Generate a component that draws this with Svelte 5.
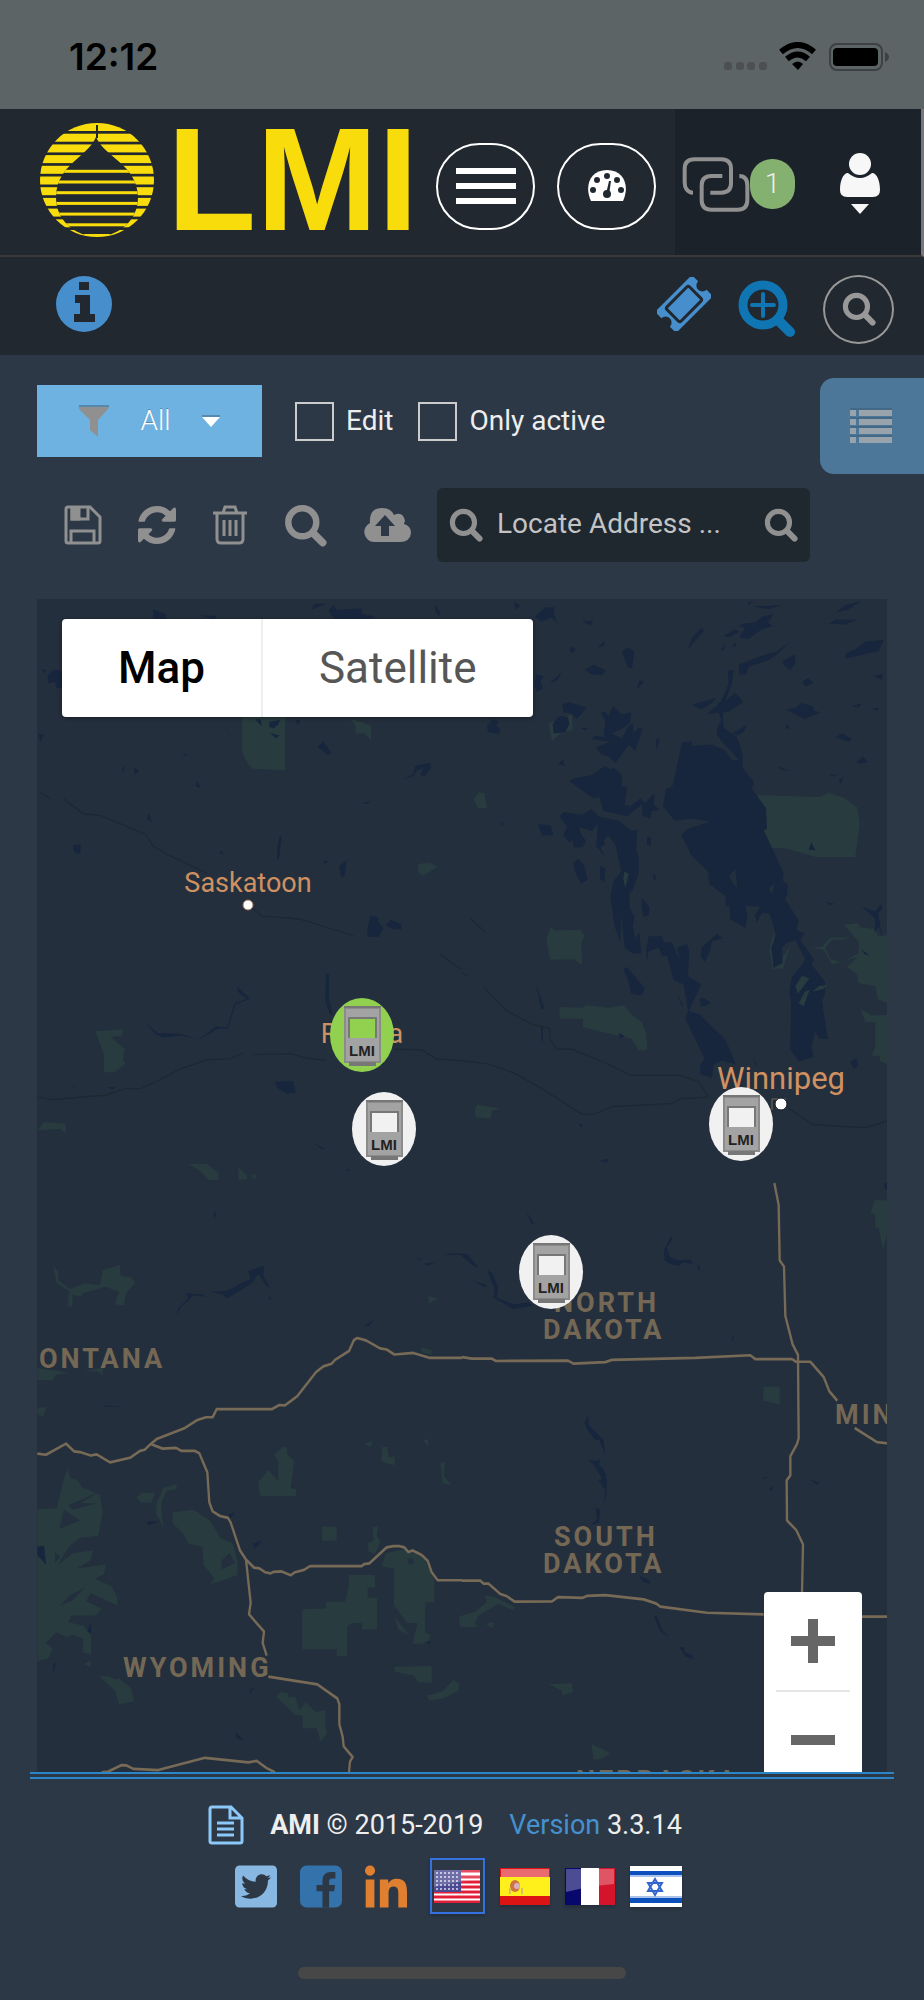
<script>
  const markers = [
    { x: 362, y: 1035, body: '#92d050', name: 'Regina station' },
    { x: 384, y: 1129, body: '#f1f1f1', name: 'South Regina station' },
    { x: 741, y: 1124, body: '#f1f1f1', name: 'Winnipeg station' },
    { x: 551, y: 1272, body: '#f1f1f1', name: 'Dakota station' }
  ];
  const stripes = Array.from({ length: 11 }, (_, i) => 1 + i * 10.7);
  let edit = $state(false);
  let active = $state(false);
  let address = $state('');
</script>

{#snippet lens(size, color)}
  <svg width={size} height={size} viewBox="0 0 40 40" fill="none" stroke={color} stroke-width="6" stroke-linecap="round" aria-hidden="true">
    <circle cx="17" cy="17" r="13" /><path d="M27 27 36 36" stroke-width="7" />
  </svg>
{/snippet}

<div class="page">
  <div class="status">
    <span class="time">12:12</span>
    <svg width="166" height="30" viewBox="0 0 166 30" aria-hidden="true">
      <g fill="#4c5051"><rect x="0" y="20" width="8" height="8" rx="3" /><rect x="12" y="20" width="8" height="8" rx="3" /><rect x="23" y="20" width="8" height="8" rx="3" /><rect x="35" y="20" width="8" height="8" rx="3" /></g>
      <g fill="none" stroke="#000" stroke-width="6"><path d="M57 10Q74-4 90 10" /><path d="M63 17Q74 8 84 17" /></g>
      <path d="M68 22Q74 17 79 22L74 28Z" />
      <rect x="106" y="2" width="52" height="26" rx="7" fill="none" stroke="#3d4143" stroke-width="2" />
      <rect x="109" y="6" width="45" height="18" rx="4" />
      <path d="M161 10q4 2 4 5t-4 5z" fill="#3d4143" />
    </svg>
  </div>

  <header>
    <a class="logo" href="#home" aria-label="LMI home">
      <svg width="116" height="116" viewBox="0 0 116 116" aria-hidden="true">
        <defs>
          <clipPath id="disc"><circle cx="58" cy="58" r="57" /></clipPath>
          <clipPath id="drop"><path d="M57 15C66 36 98 42 99 75C99 96 85 108 70 113H46C31 108 17 96 17 75C18 42 48 36 57 15Z" /></clipPath>
        </defs>
        <g clip-path="url(#disc)">
          {#each stripes as y}<rect x="0" {y} width="116" height="8" fill="#f9dc0b" />{/each}
          <g clip-path="url(#drop)">
            <rect width="116" height="116" fill="#212830" />
            {#each stripes.slice(4) as y}<rect x="0" y={y + 4} width="116" height="3" fill="#f9dc0b" />{/each}
          </g>
          <rect x="57" y="3" width="2" height="13" fill="#212830" />
        </g>
      </svg>
      <span>LMI</span>
    </a>
    <button class="pill" aria-label="Menu">
      <svg width="60" height="36" viewBox="0 0 60 36" fill="#fff"><path d="M0 0h60v6H0zM0 15h60v6H0zM0 30h60v6H0z" /></svg>
    </button>
    <button class="pill" aria-label="Dashboard">
      <svg width="40" height="34" viewBox="0 0 40 34"><path d="M4 32C-3 17 3 1 20 1S43 17 36 32Z" fill="#fff" />
        <g fill="#212830"><circle cx="20" cy="7" r="3" /><circle cx="10" cy="11" r="3" /><circle cx="30" cy="11" r="3" /><circle cx="6" cy="21" r="3" /><circle cx="34" cy="21" r="3" /><circle cx="20" cy="25" r="4" /><path d="M19 25 22 12h2l-2 14z" /></g></svg>
    </button>
    <div class="account">
      <button class="links" aria-label="Connections">
        <svg width="68" height="56" viewBox="785 466 204 168" fill="none" stroke="#909090" stroke-width="12"><path d="M818 576C800 576 793 560 793 545V505Q793 476 822 476H903Q932 476 932 505V548Q932 576 903 576H870M906 526H873Q844 526 844 555V598Q844 627 873 627H952Q981 627 981 598V555Q981 526 957 526" /></svg>
        <span class="badge">1</span>
      </button>
      <button class="user" aria-label="Account">
        <svg width="42" height="64" viewBox="0 0 42 64" fill="#f7f7f7"><path d="M9 21Q21 31 33 21C38 21 41 29 41 38Q41 45 34 45H8Q1 45 1 38C1 29 4 21 9 21Z" /><circle cx="21" cy="12" r="11" /><path d="M12 52H30L21 62Z" /></svg>
      </button>
    </div>
  </header>

  <div class="infobar">
    <button aria-label="Information">
      <svg width="56" height="56" viewBox="0 0 56 56"><circle cx="28" cy="28" r="28" fill="#478fcc" /><path d="M23 6h10v8H23zM19 19h15v19h5v8H18v-8h6V27h-5z" fill="#212830" /></svg>
    </button>
    <div class="infotools">
      <button class="ticket" aria-label="Tickets">
        <svg width="54" height="54" viewBox="0 0 54 54"><g transform="rotate(-45 27 27)"><path d="M1 14Q1 12 4 12H50Q53 12 53 14V21A6 6 0 0 0 53 33V40Q53 42 50 42H4Q1 42 1 40V33A6 6 0 0 0 1 21V14Z" fill="#478fcc" /><rect x="11" y="17" width="32" height="20" rx="2" fill="#478fcc" stroke="#212830" stroke-width="3" /></g></svg>
      </button>
      <button aria-label="Zoom to stations">
        <svg width="58" height="58" viewBox="0 0 58 58" fill="none" stroke="#0f75b3"><circle cx="25" cy="25" r="20" stroke-width="9" /><path d="M40 40 52 52" stroke-width="10" stroke-linecap="round" /><path d="M25 14V36M14 25H36" stroke-width="4" stroke-linecap="round" /></svg>
      </button>
      <button class="ring" aria-label="Search">{@render lens(34, '#989898')}</button>
    </div>
  </div>

  <main>
    <div class="filters">
      <button class="all">
        <svg width="32" height="34" viewBox="0 0 32 34"><path d="M2 1H30Q32 2 30 5L20 16V33L12 26V16L1 5Q0 2 2 1Z" fill="#909090" /><path d="M1 1H31V3H1Z" fill="#5589ad" /></svg>
        <span>All</span>
        <svg width="20" height="14" viewBox="0 0 20 14"><path d="M1 3H19L10 13Z" fill="#fff" /><path d="M1 1H19V3H1Z" fill="#5589ad" /></svg>
      </button>
      <label><input type="checkbox" bind:checked={edit} />Edit</label>
      <label><input type="checkbox" bind:checked={active} />Only active</label>
      <button class="tab" aria-label="List view">
        <svg width="42" height="37" viewBox="0 0 42 37"><path d="M0 3h6v6H0zM9 3h33v6H9zM0 12h6v6H0zM9 12h33v6H9zM0 21h6v6H0zM9 21h33v6H9zM0 30h6v6H0zM9 30h33v6H9z" fill="#98a3ac" /><path d="M0 1h42v2H0zM0 10h42v2H0zM0 19h42v2H0zM0 28h42v2H0z" fill="#426987" /></svg>
      </button>
    </div>

    <div class="tools">
      <div class="icons">
        <button aria-label="Save"><svg width="38" height="40" viewBox="0 0 38 40" fill="none" stroke="#909090" stroke-width="3"><path d="M3 2H26L36 12V36Q36 38 34 38H4Q2 38 2 36V4Q2 2 4 2ZM7 38V26H30V38" /><path d="M8 3V14H24V3" /><path d="M8 3H15V14H8z" fill="#909090" /></svg></button>
        <button aria-label="Refresh"><svg width="38" height="40" viewBox="0 0 1536 1536"><path fill="#909090" d="M1511 928q0 5-1 7-64 268-268 434.5T764 1536q-146 0-282.5-55T238 1324l-129 129q-19 19-45 19t-45-19-19-45V960q0-26 19-45t45-19h448q26 0 45 19t19 45-19 45l-137 137q71 66 161 102t187 36q134 0 250-65t186-179q11-17 53-117 8-23 30-23h192q13 0 22.5 9.5t9.5 22.5zm25-800v448q0 26-19 45t-45 19h-448q-26 0-45-19t-19-45 19-45l138-138Q969 256 768 256q-134 0-250 65T332 500q-11 17-53 117-8 23-30 23H50q-13 0-22.5-9.5T18 608v-7q65-268 270-434.5T768 0q146 0 284 55.5T1297 212l130-129q19-19 45-19t45 19 19 45z" /></svg></button>
        <button aria-label="Delete"><svg width="36" height="40" viewBox="0 0 36 40" fill="none" stroke="#909090" stroke-width="3"><path d="M1 8H35M11 8 13 2H23L25 8M5 8V34Q5 38 9 38H27Q31 38 31 34V8M12 15V31M18 15V31M24 15V31" /></svg></button>
        <button aria-label="Find">{@render lens(43, '#909090')}</button>
        <button aria-label="Upload"><svg width="48" height="36" viewBox="0 0 48 36"><path d="M11 35A10 10 0 0 1 7 16Q6 1 19 1Q28 1 31 8Q40 4 42 14Q41 16 41 17Q48 19 48 26Q47 35 37 35Z" fill="#909090" /><path d="M22 8 32 19H26V29H18V19H12Z" fill="#2d3846" /></svg></button>
      </div>
      <form class="search" onsubmit={(e) => e.preventDefault()}>
        {@render lens(34, '#909090')}
        <input type="text" aria-label="Locate address" placeholder="Locate Address ..." bind:value={address} />
        <button aria-label="Locate">{@render lens(34, '#909090')}</button>
      </form>
    </div>

    <section class="map" aria-label="Map">
      <svg class="land" viewBox="37 599 850 1173" preserveAspectRatio="xMidYMid slice">
        <g transform="translate(0 590) scale(.33333 .38265)">
          <g class="park">
            <path d="M727 330H855V472L758 467Q735 450 726 420ZM1050 335 1113 355V393L1094 375H1066V355ZM1254 716 1290 712 1312 724 1270 746 1256 740ZM286 1153 368 1148V1164L332 1168 375 1200 368 1226 376 1238 345 1260H312V1213ZM113 1412 133 1390 197 1395V1420L180 1408ZM565 1500 620 1500 656 1522V1542H625L600 1518ZM715 1508 741 1530V1540L715 1542ZM752 1530 767 1526V1542Z" />
          </g>
          <g class="water">
            <path d="M460 50 496 62 500 77 460 74ZM603 66 648 68 645 78ZM932 52 945 36 978 36ZM986 55 1000 38 1010 52 1085 48V62L1126 70 1100 78H1005ZM1304 38 1322 60 1316 68 1306 55ZM122 205 138 210 135 218ZM142 225 160 208 186 212V255L170 258 165 240 145 245ZM115 377H131L122 398ZM660 336 700 394 695 385ZM765 338H782L785 356ZM808 345 840 340 835 352 820 362 808 358ZM810 374 838 380 828 388ZM885 340H902L893 353ZM953 410 970 394 993 425 985 431ZM1208 496 1240 480 1246 460 1290 451 1294 465 1275 486 1262 484 1268 466 1250 472 1238 487ZM372 457 374 476 366 470ZM402 464 418 472 405 482ZM590 497 602 517 587 513ZM547 427 562 431 554 434ZM447 583 456 608 440 598ZM220 665 242 665 241 690 228 688 219 678ZM838 645 845 644 837 702 831 705 832 670ZM1017 722 1039 706 1035 745 1025 752ZM967 707 985 708 975 716ZM655 686 668 682 668 692ZM1112 851 1134 855 1135 868 1151 884 1135 907 1102 906V884ZM1157 876 1172 861 1204 874 1203 887 1180 886ZM978 1003 987 1005V1068L999 1110 990 1108 976 1075ZM710 1035 750 1068 706 1084 684 1147 655 1146 595 1176 648 1140 682 1144 703 1080 740 1068 716 1052ZM438 1130 472 1158 540 1160 594 1174 540 1164 490 1170 465 1160ZM826 1285 880 1284 887 1314 860 1316 830 1300ZM210 1292 230 1300 218 1298ZM323 1300 347 1298 338 1306ZM942 1446 973 1458 970 1463ZM1085 556 1114 552 1100 559ZM1040 1512 1052 1515 1045 1520Z" />
          </g>
          <path class="minor" d="M122 530 150 545M190 545 250 585 305 590 435 638 460 670 500 690 620 740M755 830 785 852 900 860 960 876 1060 903M1320 952 1386 993M115 1325 150 1332 320 1320 370 1304 425 1302 480 1280 540 1252 620 1228 690 1225 730 1210M760 1214 875 1212 910 1222 980 1230M1180 1200 1265 1202 1310 1226 1386 1230" />
        </g>
        <g transform="translate(462 590) scale(.33333 .38265)">
          <g class="park">
            <path d="M888 536 1072 541 1100 530 1145 543 1186 568 1193 610 1180 698H1062L970 675 930 674 900 625ZM260 348 330 325 332 365 295 375 270 395ZM35 547 48 530H67L75 570H47ZM253 915 265 882 280 890 355 888 368 905 358 920 360 980 335 965 265 966ZM292 1090 360 1092 375 1085 440 1092 485 1085 510 1110 540 1130 553 1160 556 1203H530L508 1172 395 1150 363 1142V1120L293 1120ZM38 1360 45 1345 115 1355 90 1362 85 1382 42 1378ZM935 895 942 940 935 985 970 950 985 930 962 990H932L922 940ZM1145 875 1188 870 1195 882 1235 885 1250 905 1275 902V1080L1248 1070 1240 1035 1190 1028 1185 1005 1155 985 1185 960 1110 978 1085 940 1050 935 1080 932 1105 908H1165L1145 914H1110L1090 935 1105 965 1140 972 1190 950V918ZM1195 1095 1230 1112 1275 1110V1238L1252 1230 1255 1217 1230 1217 1240 1190V1130L1210 1128Z" />
          </g>
          <g class="water">
            <path d="M660 398 690 396V408L750 404 790 420 810 444 830 444 765 380V360L778 340 770 320 735 325 760 305 778 290 800 245 797 210 815 210 810 245 790 290 820 268 845 293 800 318 782 320 785 360 825 385 842 430V465L875 502 870 520 912 570 915 625 905 627 965 740 962 760 978 770 975 800 968 805 1010 865 1003 890 1028 898 1015 915 1055 965 1050 980 1090 1025 1088 1060 1080 1075 1098 1174 1072 1172 1060 1155 1048 1195 1055 1220 1010 1232 985 1200 987 1078 982 1045 990 1010 1020 980 1030 965 1000 915 975 922 960 935 962 975 935 988 928 935 942 900 922 845 900 845 885 868 878 850 895 828 850 825 857 850 850 884 804 860 803 827 792 826 790 800 742 768 738 735 688 693 658 640 675 625 745 605 690 598 638 603 603 565 612 520 632 512Z" />
            <path d="M322 500 335 492 385 485 430 460 448 470 455 463 480 485V512L495 515 488 562 505 565 537 543 548 557 578 530 575 560 592 574 570 578 565 598 542 590 540 560 495 592 425 577 412 540 395 545 330 505ZM292 592 305 580 360 588 388 573 410 592 470 603 510 630 525 625 523 680 530 700V740L512 785 502 790 503 830 518 855 512 880 520 910 532 895 538 950 512 950 488 935 478 850 475 920 458 880 445 800 455 760 478 735 460 665 438 640 425 655 430 665 415 672 430 698 403 670 407 610 390 630 352 620 355 635 372 655 362 672 335 672 332 655 320 660 303 640 315 618ZM335 715 348 702 367 720 377 757 357 768 338 735ZM414 720 430 728 427 765 414 755ZM540 805 562 828 560 850 545 855 538 830ZM560 905 600 905 605 920 630 922 655 970 645 935 675 925 682 945 678 1010 718 1030 680 1100 715 1110 790 1175 822 1240 780 1230 755 1240 750 1275 715 1265V1240L728 1225 670 1120 678 1100 665 1030 635 1020 615 955 600 958 590 935 560 945 555 970 552 940ZM718 935 765 898 782 910 750 918 745 940 728 973 716 955ZM484 990 495 985 548 1040 540 1060 508 1055 500 1025ZM712 1070 725 1065 747 1080 718 1090ZM645 1055 665 1090 658 1085ZM222 1030 248 1095 238 1096ZM237 1140 242 1142 243 1188 238 1172Z" />
            <path d="M272 350 290 330 318 332 322 350 310 372 275 375ZM300 300 320 293 375 308 345 337 325 322 305 320ZM415 320 430 318 440 330 453 303 478 325 508 320 505 345 485 360 450 375 480 388 500 355 512 348 515 375 530 360 542 362 520 420 500 405 460 452 440 435 418 430 402 410 440 398 468 400 390 390 398 380 425 385 430 340ZM582 390 595 387 583 418ZM75 355 95 338 110 345 102 352 115 365 112 377 78 372ZM218 70 250 45 278 45 275 60 285 85 268 72 240 83ZM155 30 177 42 160 50ZM368 210 395 195 432 210 420 222 390 220ZM480 160 497 150 517 160 510 205 498 203 485 175ZM405 150 430 133 425 147ZM322 155 332 147 341 155 330 166ZM222 220 245 225 235 240 244 258 225 265 218 250ZM262 245 298 215 288 235ZM523 260 533 235 547 240ZM360 80 375 82 395 80 385 92 365 84ZM678 155 690 125 720 98 725 107ZM785 120 820 102 832 110 800 124ZM832 120 850 100 832 95 840 88 880 85 900 70 935 62 918 85 932 95 900 102 860 128 835 125ZM870 43 958 40 920 50ZM855 35 875 28 860 40ZM775 158 790 140 785 158ZM810 145 825 135 818 150ZM830 195 900 172 945 160 985 135 940 172 915 185 862 200 850 222 832 220ZM960 187 1000 168 1000 190 985 210 970 200ZM1020 240 1038 230 1055 243 1030 252ZM690 300 762 282 750 295 718 312ZM972 312 1000 308 1020 295 1055 305 1055 315 1075 320 1028 337ZM1120 60 1150 40 1200 28 1160 50ZM1100 88 1122 77 1188 78 1150 90ZM1150 165 1180 155 1210 135 1265 130 1250 160 1220 165 1150 180ZM1235 225 1262 220 1260 235ZM1170 303 1200 295 1190 308ZM1230 310 1248 308 1250 317ZM1120 385 1140 375 1170 388 1160 397ZM1182 450 1205 435 1218 450 1195 454ZM945 460 985 473 960 470ZM1100 482 1128 482 1108 488ZM1130 495 1145 490 1135 507ZM810 375 855 352 845 372 825 380ZM228 612 265 615 275 640 240 642ZM1048 660 1060 680 1040 678ZM555 645H567V667H555ZM572 740 585 750 577 760ZM1200 828 1240 840 1255 820 1262 832 1248 845 1260 905 1250 880 1238 895 1240 860ZM1198 938 1222 955 1208 952ZM1165 1232 1185 1223 1187 1245 1175 1252ZM1088 815 1118 820 1105 824ZM470 1158 488 1165 475 1172ZM410 1492 442 1486 435 1495ZM875 1227 888 1242 880 1240ZM350 1393 363 1398 355 1404ZM288 455 303 443 308 460ZM115 610 125 604 120 617ZM975 350 985 362 970 362ZM355 360 378 360 368 367Z" />
          </g>
          <path d="M800 750 820 728 826 780ZM920 780 938 765 930 795Z" fill="#242f3d" />
          <g class="park"><path d="M487 735 500 742 490 778 484 755ZM1000 1035 1020 1008 1042 1015 1008 1055ZM1052 1050 1070 1035 1097 1032 1085 1042ZM1010 1080 1028 1050 1043 1045 1025 1088Z" /></g>
          <path class="minor" d="M25 858 68 893M0 1000 18 1010M65 1038 135 1100 210 1135 262 1145 265 1175 285 1200H330L420 1232 505 1268H655L710 1285 738 1325 655 1330 630 1342 450 1350 395 1370H360L230 1298 155 1262 75 1238 0 1230M980 1355 1055 1398 1210 1405 1275 1388" />
        </g>
        <g transform="translate(0 1180) scale(.33333 .38265)">
          <g class="park">
            <path d="M160 225 175 240V262L210 285 255 270 300 275 308 235 360 222 362 250 395 255 405 270 378 295 372 328 345 325 357 292 315 278 275 290 248 295 245 305 218 300 217 330H203L208 290 170 270ZM112 492 170 498 205 505 170 508 158 523H112ZM112 595 140 593 128 620 112 610ZM250 500 310 490 308 510 290 500ZM1285 303 1315 310 1286 323ZM1262 437 1295 445V457L1265 450ZM210 745 205 762 212 778 235 785 245 803 300 822 308 868 295 930 240 935 205 960 175 1005 220 975 280 968 270 995 230 1015 318 1005 312 1030 285 1042 335 1062 352 1090V1112L272 1080 258 1100 305 1120 285 1138H215L205 1155 250 1165 273 1190V1240L248 1235 250 1200 220 1188 200 1195 168 1182 138 1210 158 1225 145 1250 112 1258V860L170 858 195 770ZM410 830 425 817H465L455 843H422ZM470 845 490 805 530 795V808L500 812 483 845 485 880 492 910 468 870ZM518 868 580 862 632 892 660 935 698 950 713 1000V1032L630 1058 643 1042 610 1005 608 960 565 950 550 925 518 897ZM775 790 805 757 835 788 835 735 823 718 850 697 862 700 860 715 883 735 872 805 888 808V826H780ZM1092 690 1118 682 1112 698ZM1143 735 1147 698H1162L1167 725 1184 722V745L1160 740ZM1270 680 1284 677V697ZM1321 738H1335L1332 775 1355 797 1328 793ZM966 906H1010V943H966ZM1118 906H1135L1130 930 1142 945 1125 978 1105 970 1104 948 1120 943ZM907 1122 978 1120V1102H1035L1045 1068 1048 1032H1124L1126 1065H1103V1092H1131V1175H1086V1158H1055L1041 1168V1244H1010V1226H907ZM1145 1010 1158 975 1215 965 1270 985 1295 1025 1303 1045V1103L1276 1104 1275 1182 1293 1190 1280 1212H1237L1253 1158H1222L1208 1142 1182 1112V1015ZM1182 1140 1230 1192 1195 1175ZM1182 1272 1295 1270V1313H1255L1240 1295 1185 1285ZM1280 1348 1330 1335 1360 1307 1378 1315 1375 1335 1330 1355 1290 1360ZM828 1350 843 1338 865 1342V1352L885 1350 898 1385 917 1365 947 1390 976 1385V1430L982 1448 962 1468 950 1433H908V1400L885 1397ZM298 1297H325L345 1305 358 1302 395 1330 402 1363 357 1370 345 1335ZM252 1265 272 1255V1273ZM1378 1140H1386V1172L1378 1160Z" />
          </g>
          <path d="M192 862 240 890 178 912ZM205 850 298 815 240 845 292 845 220 862ZM180 985 165 1000V972ZM180 1112 210 1085 255 1065 215 1100ZM688 975 705 1000 665 1018V995ZM1222 990H1240V1003H1225Z" fill="#242f3d" />
          <g class="water"><path d="M745 238 792 224 790 250 810 280 800 278 775 245 755 270 682 310 665 298 632 293 675 290 705 280 720 270 750 260ZM795 217 860 222 820 218ZM558 295 612 300 615 305 580 302 545 330 530 352 535 335 565 308ZM488 312 508 312ZM640 90 648 80 645 102ZM1095 380 1120 366 1108 382ZM1272 218 1308 215 1280 225ZM1248 203 1267 207 1260 210ZM1325 198 1350 192H1386V196H1340ZM312 588 368 594 315 592ZM440 893 478 892 445 902ZM685 875 706 868 690 885ZM757 950 785 943 765 964ZM112 958 132 956 138 1005 112 980ZM272 1155 274 1185 262 1180ZM160 1265 168 1262 160 1290ZM750 1332 762 1325 750 1343ZM705 1442 732 1465 710 1458ZM150 1420 158 1447ZM1270 1208 1292 1206 1290 1212ZM803 304 814 308 812 314Z" /></g>
          <g class="road"><path d="M112 715 138 718 198 689 222 709 240 711 272 720 290 717 330 738 390 726 420 708 434 705 452 690 470 677 555 648 590 628 618 620H638L650 599H815L838 588 855 589 892 565 948 502 970 487 995 480 1005 470 1047 447 1062 418 1072 413 1098 419 1140 440 1160 443 1183 456 1240 452 1290 465H1386M452 690 488 702 528 700 545 708H585L598 714 622 764 628 843 638 866 660 878 684 883 692 895 720 968 738 992 762 1013 778 1015 795 1025 812 1028 820 1024 845 1023 872 1033 885 1025 912 1019 930 1009H1085L1092 1004 1108 1002 1160 960 1180 957H1200L1213 960 1225 972 1238 968 1265 980 1283 995 1295 1025 1313 1046H1386M738 992 752 1105 747 1135 792 1180 788 1210 800 1243M805 1298 952 1318 1012 1355 1018 1370V1422L1028 1455 1031 1480 1058 1508 1050 1520 1047 1548M305 1548 325 1546 365 1529 380 1530 400 1539 475 1542 615 1510 745 1522 770 1518 800 1537 825 1548" /></g>
        </g>
        <g transform="translate(462 1180) scale(.33333 .38265)">
          <g class="park"><path d="M1226 85 1238 53H1275V145L1263 180 1250 125H1240V90ZM905 540H953V586L903 577ZM68 1085 98 1090 158 1115 155 1125 110 1108 50 1138 38 1160 50 1168H0V1138L40 1128 75 1102ZM70 1160 97 1155 93 1172ZM260 1318 330 1315 333 1338 302 1348 300 1335ZM388 1473 445 1498 420 1513 395 1515Z" /></g>
          <g class="water"><path d="M0 192 18 195 48 228 38 226 0 200ZM75 235 92 245 108 280 105 308 155 325 200 320 215 328 155 338 95 308 98 285ZM30 262 75 275 68 280ZM192 82 218 115 208 113ZM605 185 628 146 632 155 615 175 622 200 650 210 685 208 693 220 665 215 650 225 625 220 608 210ZM705 220 715 228 710 238ZM1035 398 1058 388 1045 395ZM808 418 818 402 812 420ZM380 540 382 575ZM367 635 378 615 380 640 425 680 430 720 412 680 398 678 375 650ZM380 730 400 735 415 730 410 745 425 755 435 782 433 820 425 848 430 810 410 785 420 780 398 748ZM400 858 414 860 411 895 388 902 405 885ZM532 1035 560 1045 567 1055 542 1050ZM575 1138 585 1140 600 1175 620 1193 595 1180ZM652 1220 665 1222 668 1235 690 1240 693 1252 670 1245ZM902 778 920 775 905 782ZM920 808 932 800V812ZM1040 780 1072 792 1065 797ZM1267 8H1275V26L1267 20ZM325 430 330 465ZM508 430 515 440Z" /></g>
          <g class="road"><path d="M0 463 30 467H90L102 473 318 472 335 480 430 476 450 470 700 465 865 458 880 468H990L1002 475H1045L1085 515 1102 552 1126 577M1178 648 1245 685 1275 688M937 8 950 65 953 210 966 226 970 355 992 430 1008 457 1010 675 1005 690 985 722 985 772 974 785 975 890 1003 915 1023 952 1020 1080M0 1047H55L65 1055H80L115 1082 133 1087 158 1102 270 1101 288 1090 362 1092 375 1087 430 1085 545 1096 583 1107 595 1115 735 1131 905 1135M1200 1141H1275" /></g>
        </g>
        <g class="city">
          <text x="248" y="892" font-size="27">Saskatoon</text>
          <text x="362" y="1043" font-size="27">Regina</text>
          <text x="781" y="1089" font-size="31">Winnipeg</text>
        </g>
        <path d="M772 1110V1099H786" fill="none" stroke="#79684f" />
        <g fill="#fff" stroke="#a17458"><circle cx="248" cy="905" r="5" /><circle cx="781" cy="1104" r="6" stroke="#111923" /></g>
        <g class="state">
          <text x="39" y="1368">ONTANA</text>
          <text x="554" y="1312">NORTH</text>
          <text x="543" y="1339">DAKOTA</text>
          <text x="554" y="1546">SOUTH</text>
          <text x="543" y="1573">DAKOTA</text>
          <text x="123" y="1677">WYOMING</text>
          <text x="835" y="1424">MINNESOTA</text>
          <text x="576" y="1790">NEBRASKA</text>
        </g>
      </svg>

      {#each markers as m}
        <button class="marker" aria-label={m.name} style="left: {((m.x - 37) / 850) * 100}%; top: {((m.y - 599) / 1173) * 100}%">
          <svg width="64" height="74" viewBox="0 0 64 74">
            <ellipse cx="32" cy="37" rx="32" ry="37" fill={m.body} />
            <rect x="15" y="10" width="35" height="54" fill="#a3a3a3" stroke="#8b8b8b" stroke-width="2" />
            <path d="M14 9H51" stroke="#777" stroke-width="2" />
            <path d="M19 66H46" stroke="#777" stroke-width="4" />
            <rect x="20" y="21" width="25" height="19" fill={m.body} />
            <path d="M19 40V20H46V40" fill="none" stroke="#777" stroke-width="2" />
            <text x="32" y="58" text-anchor="middle" font-family="Liberation Sans" font-weight="700" font-size="15" fill="#222">LMI</text>
          </svg>
        </button>
      {/each}

      <div class="types">
        <button class="on">Map</button>
        <button>Satellite</button>
      </div>
      <div class="zoom">
        <button aria-label="Zoom in"><svg width="44" height="44" viewBox="0 0 44 44" fill="#666"><path d="M17 0h10v17h17v10H27v17H17V27H0V17h17z" /></svg></button>
        <button aria-label="Zoom out"><svg width="44" height="44" viewBox="0 0 44 44" fill="#666"><path d="M0 17h44v10H0z" /></svg></button>
      </div>
    </section>
  </main>

  <footer>
    <div class="copy">
      <svg width="36" height="40" viewBox="0 0 36 40" fill="none" stroke="#8cc8f8" stroke-width="3" aria-hidden="true"><path d="M4 2H23L34 13V36Q34 38 32 38H4Q2 38 2 36V4Q2 2 4 2ZM22 2V13H34M9 18H26M9 24H26M9 30H26" /></svg>
      <span><b>AMI</b> © 2015-2019</span>
      <span><a href="#version">Version</a> 3.3.14</span>
    </div>
    <div class="social">
      <a href="#twitter" aria-label="Twitter"><svg width="42" height="43" viewBox="0 32 448 448"><path fill="#88b7e1" d="M400 32H48C21.5 32 0 53.5 0 80v352c0 26.5 21.5 48 48 48h352c26.5 0 48-21.5 48-48V80c0-26.5-21.5-48-48-48zm-48.9 158.8c.2 2.8.2 5.7.2 8.5 0 86.7-66 186.6-186.6 186.6-37.2 0-71.7-10.8-100.7-29.4 5.3.6 10.4.8 15.8.8 30.7 0 58.9-10.4 81.4-28-28.8-.6-53-19.5-61.3-45.5 10.1 1.5 19.2 1.5 29.6-1.2-30-6.1-52.5-32.5-52.5-64.4v-.8c8.7 4.9 18.9 7.9 29.6 8.3a65.447 65.447 0 0 1-29.2-54.6c0-12.2 3.2-23.4 8.9-33.1 32.3 39.8 80.8 65.8 135.2 68.6-9.3-44.5 24-80.6 64-80.6 18.9 0 35.9 7.9 47.9 20.7 14.8-2.8 29-8.3 41.6-15.8-4.9 15.2-15.2 28-28.8 36.1 13.2-1.4 26-5.1 37.8-10.2-8.9 13.1-20.1 24.7-32.9 34z" /></svg></a>
      <a href="#facebook" aria-label="Facebook"><svg width="42" height="43" viewBox="0 0 127 127"><rect width="127" height="127" rx="20" fill="#3372aa" /><path d="M68 127V78H50V59H68V46Q68 20 93 20H107V39H98Q88 39 88 49V59H106L103 78H88V127Z" fill="#2d3846" /></svg></a>
      <a href="#linkedin" aria-label="LinkedIn"><svg width="42" height="43" viewBox="0 0 448 448"><path fill="#e07f30" d="M100.28 448H7.4V148.9h92.88zM53.79 108.1C24.09 108.1 0 83.5 0 53.8a53.79 53.79 0 0 1 107.58 0c0 29.7-24.1 54.3-53.79 54.3zM447.9 448h-92.68V302.4c0-34.7-.7-79.2-48.29-79.2-48.29 0-55.69 37.7-55.69 76.7V448h-92.78V148.9h89.08v40.8h1.3c12.4-23.5 42.69-48.3 87.88-48.3 94 0 111.28 61.9 111.28 142.3V448z" /></svg></a>
      <div class="flags">
        <button class="current" aria-label="English"><svg width="46" height="33" viewBox="0 0 46 33"><path fill="#fff" d="M0 0h46v33H0z" /><path d="M0 1H46M0 7H46M0 12H46M0 17H46M0 22H46M0 27H46M0 32H46" stroke="#e21f38" stroke-width="3" /><path fill="#4b4a92" d="M0 0h27v22H0z" /><path d="M2 3H26M2 7H26M2 11H26M2 15H26M2 19H26" stroke="#b7b9d9" stroke-width="2" stroke-dasharray="2 2" /><path d="M0 0H46V10Q25 11 0 17Z" fill="#fff" opacity=".2" /></svg></button>
        <button aria-label="Español"><svg width="50" height="37" viewBox="0 0 50 37"><path fill="#dd1414" d="M0 0h50v37H0z" /><path fill="#fff01c" d="M0 9h50v19H0z" /><path fill="#e96a6f" d="M1 1h48v8H1z" /><ellipse cx="15" cy="18" rx="5" ry="6" fill="#cf7440" /><circle cx="17" cy="18" r="3" fill="#d9b0bd" /><path d="M10 20v6M22 20v6" stroke="#d8c060" stroke-width="2" /></svg></button>
        <button aria-label="Français"><svg width="50" height="37" viewBox="0 0 50 37"><path fill="#07076c" d="M0 0h16v37H0z" /><path fill="#fff" d="M16 0h18v37H16z" /><path fill="#d4142b" d="M34 0h16v37H34z" /><path d="M1 1H49V16Q25 18 1 24Z" fill="#fff" opacity=".28" /></svg></button>
        <button aria-label="עברית"><svg width="52" height="41" viewBox="0 0 52 41"><path fill="#fff" d="M0 0h52v41H0z" /><path fill="#0c50bd" d="M0 5h52v4H0zM0 32h52v5H0z" /><path fill="#a8c2ea" d="M0 9h52v2H0zM0 30h52v2H0z" /><path d="M25 13 32 25H18ZM25 29 18 17H32Z" fill="none" stroke="#3266cc" stroke-width="2" /></svg></button>
      </div>
    </div>
    <div class="home"></div>
  </footer>
</div>

<style>
  :global(body) { margin: 0; background: #2d3846; }
  .page { font: 400 28px/36px Roboto, "Noto Sans", sans-serif; color: #eee; background: #2d3846; overflow: hidden; }
  button { font: inherit; color: inherit; background: none; border: 0; padding: 0; margin: 0; cursor: pointer; }
  svg { display: block; flex: none; }
  .status { display: flex; justify-content: space-between; align-items: center; height: 109px; padding: 4px 34px 0 69px; box-sizing: border-box; background: #5d6466; }
  .time { font: 600 37px/44px Inter, sans-serif; color: #000; }
  header { display: flex; align-items: center; height: 146px; border-bottom: 2px solid #3b3836; background: #212830; padding-left: 39px; border-right: 3px solid #777; }
  .logo { display: flex; align-items: center; gap: 12px; flex: 0 0 397px; min-width: 0; height: 146px; padding-bottom: 4px; box-sizing: border-box; color: #f9dc0b; text-decoration: none; }
  .logo span { font: 700 146px/116px "Liberation Sans Narrow", "Arial Narrow", "Liberation Sans", sans-serif; }
  .pill { display: grid; place-items: center; flex: none; box-sizing: border-box; width: 99px; height: 87px; margin-top: 8px; margin-right: 22px; border: 2px solid #fff; border-radius: 44px; }
  .account { display: flex; align-items: center; justify-content: space-between; flex: 1; height: 146px; box-sizing: border-box; padding: 4px 40px 0 7px; margin-left: -3px; background: #1b2229; }
  .links { display: flex; align-items: center; }
  .badge { display: grid; place-items: center; width: 45px; height: 50px; border-radius: 22px; background: #84b070; font-weight: 300; }
  .infobar { display: flex; justify-content: space-between; align-items: center; height: 98px; padding: 0 30px 0 56px; background: #212830; }
  .infobar > button { margin-bottom: 4px; }
  .infotools { display: flex; align-items: center; gap: 27px; padding-top: 6px; }
  .ticket { margin-bottom: 10px; }
  .ring { display: grid; place-items: center; width: 71px; height: 69px; box-sizing: border-box; border: 2px solid #989898; border-radius: 50%; }
  .filters { display: flex; align-items: center; padding: 23px 0 0 37px; }
  .filters label { display: flex; align-items: center; gap: 12px; margin-right: 25px; padding-bottom: 10px; }
  .filters input { appearance: none; margin: 0; width: 39px; height: 39px; border: 2px solid #ccc; background: none; }
  .filters input:checked { background: #6db2e0; }
  .all { display: flex; align-items: center; justify-content: center; gap: 30px; width: 225px; height: 72px; margin: 0 33px 10px 0; background: #6db2e0; font-weight: 300; color: #fff; text-shadow: 0 -1px #5589ad; }
  .tab { display: grid; place-items: center; width: 104px; height: 96px; margin-left: auto; padding: 0 2px 2px 0; border-radius: 14px 0 0 14px; background: #4d7799; }
  .tools { display: flex; align-items: center; gap: 26px; padding: 14px 114px 0 64px; }
  .icons { display: flex; align-items: center; gap: 36px; }
  .search { display: flex; align-items: center; flex: 1; min-width: 0; height: 74px; box-sizing: border-box; padding: 0 12px; border-radius: 6px; background: #1f272f; }
  .search input { flex: 1; min-width: 0; padding: 0 0 2px 14px; border: 0; outline: 0; background: none; font: inherit; color: #ccc; }
  .search input::placeholder { color: #c4c4c4; opacity: 1; }
  .map { position: relative; margin: 37px 37px 0; aspect-ratio: 850 / 1173; overflow: hidden; background: #242f3d; }
  .land { width: 100%; height: 100%; }
  .park { fill: #283b3f; }
  .water { fill: #17263d; }
  .minor { fill: none; stroke: #1d2732; stroke-width: 3; }
  .road { fill: none; stroke: #776a56; stroke-width: 7; stroke-linejoin: round; }
  .city { fill: #cf9162; text-anchor: middle; }
  .state { fill: #746855; font-size: 27px; font-weight: 700; letter-spacing: 3px; }
  .marker { position: absolute; transform: translate(-50%, -50%); }
  .types { position: absolute; left: 25px; top: 20px; display: flex; background: #fff; border-radius: 4px; box-shadow: 0 1px 4px #0006; font-size: 44px; line-height: 98px; color: #565656; }
  .types button { padding: 0 56px; }
  .types .on { color: #000; font-weight: 500; border-right: 2px solid #eee; }
  .zoom { position: absolute; right: 25px; top: 993px; width: 98px; background: #fff; border-radius: 4px; }
  .zoom button { display: grid; place-items: center; width: 74px; height: 98px; margin: 0 12px; }
  .zoom button + button { border-top: 2px solid #e6e6e6; }
  footer { margin: 0 30px; border-top: 7px double #2b85c9; }
  .copy { display: flex; align-items: center; justify-content: center; gap: 26px; padding: 26px 0 0; margin-right: 34px; font-size: 27px; }
  .copy a { color: #4590cf; text-decoration: none; }
  .social { display: flex; align-items: center; justify-content: center; gap: 23px; padding-top: 13px; margin-right: 8px; }
  .flags { display: flex; align-items: center; gap: 15px; }
  .flags button { box-shadow: 0 2px 3px #0003; }
  .current { display: grid; place-items: center; width: 55px; height: 56px; box-sizing: border-box; border: 2px solid #3572e0; }
  .home { width: 38%; height: 12px; margin: 53px auto 20px; border-radius: 6px; background: #474747; }
</style>
